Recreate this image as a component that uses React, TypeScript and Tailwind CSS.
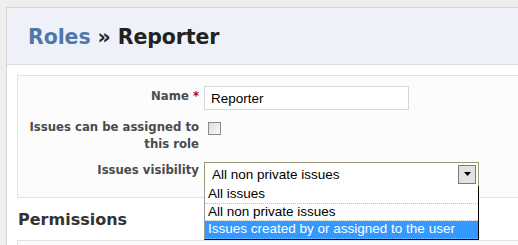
import React from "react";

const options = ["All issues", "All non private issues", "Issues created by or assigned to the user"];

export default function App() {
  return (
    <div className="w-[518px] h-[245px] overflow-hidden bg-[#eeeeee] pl-[6px] pt-[7px] font-['DejaVu_Sans',Verdana,sans-serif]">
      <div className="h-full bg-white border-l border-t border-[#d5d5d5]">
        {/* Header */}
        <div className="h-[57px] bg-[#eef2f8] border-b border-[#d6dde7] pl-[21px] pt-[17px]">
          <h2 className="text-[20.5px] font-bold text-[#222] leading-[24px] tracking-[-0.1px]">
            <span className="text-[#4f78a8]">Roles</span> » Reporter
          </h2>
        </div>

        <div className="pl-[10px] pt-[10px]">
          {/* Fieldset */}
          <div className="relative bg-[#fcfcfc] border border-[#e2e2e2] border-r-0 pt-[10px] pb-[10px]">
            <div className="grid grid-cols-[181px_1fr] gap-x-[5px] gap-y-[9px] text-[11.7px] font-bold text-[#4b4b4b] leading-[17px]">
              <label className="text-right pt-[2px]">
                Name <span className="text-[#bb0000]">*</span>
              </label>
              <div>
                <div className="w-[205px] h-[24px] border border-[#d7d7d7] bg-white pl-[6px] flex items-center font-['Liberation_Sans',Arial,sans-serif] font-normal text-[13.5px] text-black">
                  Reporter
                </div>
              </div>

              <label className="text-right">
                Issues can be assigned to
                <br />
                this role
              </label>
              <div className="pt-[3px] pl-[4px]">
                <div className="w-[13px] h-[13px] border border-[#8a8a8a] bg-gradient-to-br from-[#dcdcdc] to-[#fafafa]" />
              </div>

              <label className="text-right">Issues visibility</label>
              <div className="relative">
                <div className="w-[275px] h-[25px] border border-[#9a9a78] bg-white flex items-center pl-[7px] pr-[2px] font-['Liberation_Sans',Arial,sans-serif] font-normal text-[13.5px] text-black">
                  <span className="flex-1">All non private issues</span>
                  <div className="w-[18px] h-[19px] border border-[#7a7a7a] bg-[#e2e2e2] flex items-center justify-center">
                    <svg width="9" height="5" viewBox="0 0 9 5">
                      <path d="M1 0h7L4.5 4z" fill="#000" />
                    </svg>
                  </div>
                </div>
                {/* Open dropdown list */}
                <div className="absolute left-0 top-[24px] z-10 w-[275px] bg-white border border-l-[#9a9a9a] border-t-0 border-r-black border-b-black font-['Liberation_Sans',Arial,sans-serif] font-normal text-[13.5px] text-black leading-[16px]">
                  {options.map((o, i) => (
                    <div
                      key={o}
                      className={`h-[17.5px] pl-[3px] border-b border-dotted border-[#bdbdbd] ${
                        i === 2 ? "bg-[#3399ff] text-white" : ""
                      }`}
                    >
                      {o}
                    </div>
                  ))}
                </div>
              </div>
            </div>
          </div>

          <h3 className="mt-[12px] pl-[1px] text-[16px] font-bold text-[#333] leading-[20px]">Permissions</h3>
          <div className="mt-[10px] h-[20px] bg-[#fcfcfc] border border-[#e2e2e2] border-r-0" />
        </div>
      </div>
    </div>
  );
}
